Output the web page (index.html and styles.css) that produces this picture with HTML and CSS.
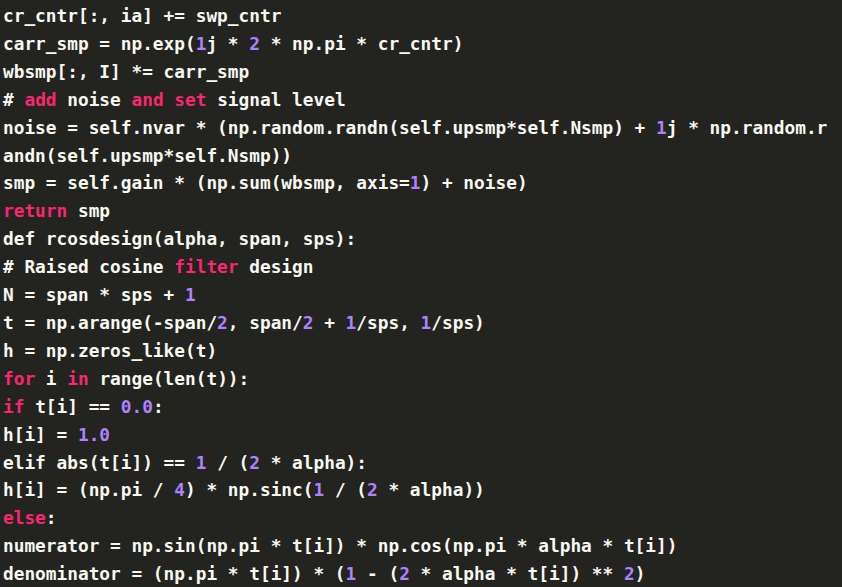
FILE: index.html
```html
<!DOCTYPE html>
<html>
<head>
<meta charset="utf-8">
<link rel="stylesheet" href="styles.css">
</head>
<body>
<pre class="code"><span class="ln">cr_cntr[:, ia] += swp_cntr</span>
<span class="ln">carr_smp = np.exp(<span class="n">1</span>j * <span class="n">2</span> * np.pi * cr_cntr)</span>
<span class="ln">wbsmp[:, I] *= carr_smp</span>
<span class="ln"># <span class="k">add</span> noise <span class="k">and</span> <span class="k">set</span> signal level</span>
<span class="ln">noise = self.nvar * (np.random.randn(self.upsmp*self.Nsmp) + <span class="n">1</span>j * np.random.r</span>
<span class="ln">andn(self.upsmp*self.Nsmp))</span>
<span class="ln">smp = self.gain * (np.sum(wbsmp, axis=<span class="n">1</span>) + noise)</span>
<span class="ln"><span class="k">return</span> smp</span>
<span class="ln">def rcosdesign(alpha, span, sps):</span>
<span class="ln"># Raised cosine <span class="k">filter</span> design</span>
<span class="ln">N = span * sps + <span class="n">1</span></span>
<span class="ln">t = np.arange(-span/<span class="n">2</span>, span/<span class="n">2</span> + <span class="n">1</span>/sps, <span class="n">1</span>/sps)</span>
<span class="ln">h = np.zeros_like(t)</span>
<span class="ln"><span class="k">for</span> i <span class="k">in</span> range(len(t)):</span>
<span class="ln"><span class="k">if</span> t[i] == <span class="n">0.0</span>:</span>
<span class="ln">h[i] = <span class="n">1.0</span></span>
<span class="ln">elif abs(t[i]) == <span class="n">1</span> / (<span class="n">2</span> * alpha):</span>
<span class="ln">h[i] = (np.pi / <span class="n">4</span>) * np.sinc(<span class="n">1</span> / (<span class="n">2</span> * alpha))</span>
<span class="ln"><span class="k">else</span>:</span>
<span class="ln">numerator = np.sin(np.pi * t[i]) * np.cos(np.pi * alpha * t[i])</span>
<span class="ln">denominator = (np.pi * t[i]) * (<span class="n">1</span> - (<span class="n">2</span> * alpha * t[i]) ** <span class="n">2</span>)</span></pre>
</body>
</html>
```
FILE: styles.css
```css
html, body {
  margin: 0;
  padding: 0;
  background: #23241f;
  height: 100%;
}
.code {
  margin: 0;
  padding: 2px 0 0 3px;
  font-family: "DejaVu Sans Mono", monospace;
  font-size: 17.8px;
  line-height: 27.9px;
  font-weight: bold;
  color: #f8f8f2;
  white-space: pre;
}
.k {
  color: #f92672;
}
.n {
  color: #ae81ff;
}
```
